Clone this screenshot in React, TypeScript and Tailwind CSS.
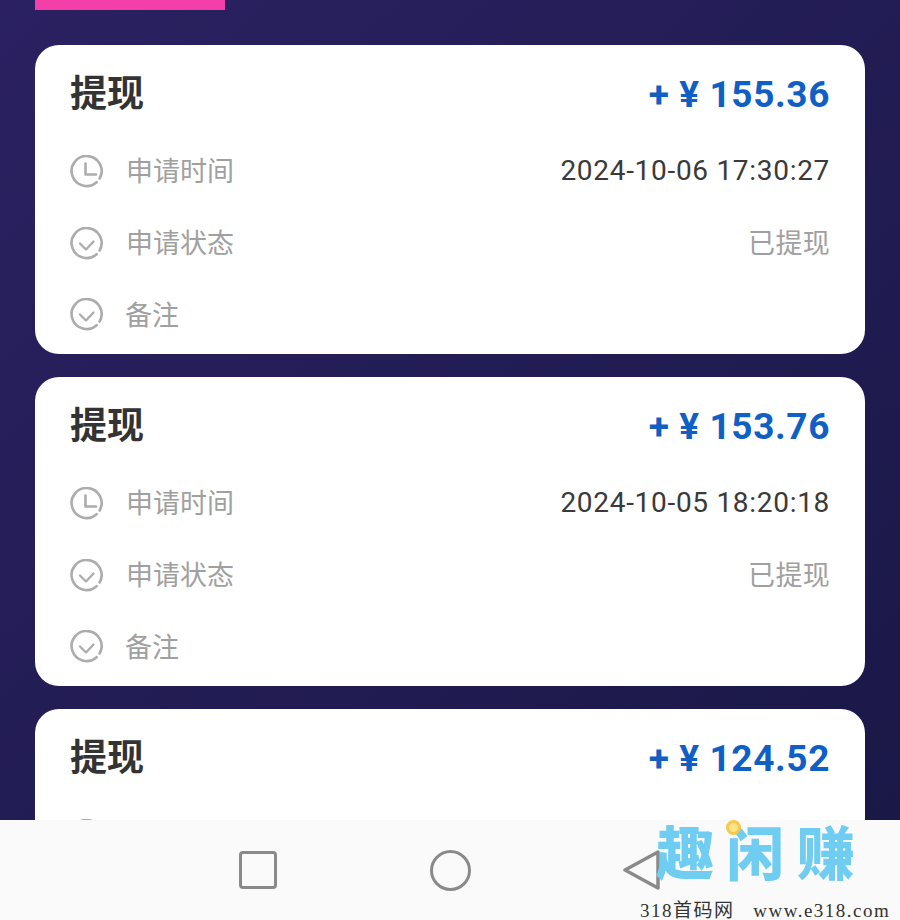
const cjk = "font-['Roboto','Noto_Sans_CJK_SC',sans-serif]";

interface Record {
  amount: string;
  time?: string;
}

const records: Record[] = [
  { amount: '155.36', time: '2024-10-06 17:30:27' },
  { amount: '153.76', time: '2024-10-05 18:20:18' },
  { amount: '124.52' },
];

function ClockIcon() {
  return (
    <svg width="33" height="33" viewBox="0 0 33 33" fill="none" stroke="#acacac" strokeWidth="2.6" strokeLinecap="round" strokeLinejoin="round" className="shrink-0">
      <path d="M26.6 27.2A15 15 0 1 1 29.6 23.5" />
      <path d="M15.5 8.5V19.5H26" />
    </svg>
  );
}

function CheckIcon() {
  return (
    <svg width="33" height="33" viewBox="0 0 33 33" fill="none" stroke="#acacac" strokeWidth="2.6" strokeLinecap="round" strokeLinejoin="round" className="shrink-0">
      <path d="M26.6 27.2A15 15 0 1 1 29.6 23.5" />
      <path d="M10 16.5L16 22.5L23.5 14.5" strokeWidth="2.3" />
    </svg>
  );
}

function Row({ icon, label, value, valueClass, labelClass }: { icon: React.ReactNode; label?: string; value?: string; valueClass?: string; labelClass?: string }) {
  return (
    <div className="flex h-[72px] items-center justify-between">
      <div className="flex items-center">
        {icon}
        {label && <span className={`pt-[2px] text-[27px] leading-none text-[#a0a0a0] ${labelClass ?? 'ml-[23px]'}`}>{label}</span>}
      </div>
      {value && <span className={valueClass}>{value}</span>}
    </div>
  );
}

function RecordCard({ record }: { record: Record }) {
  return (
    <div className="shrink-0 rounded-[24px] bg-white px-[35px] pb-[3px]">
      <div className="flex h-[90px] items-center justify-between pt-[8px]">
        <span className="text-[37px] leading-none font-bold text-[#333333]">提现</span>
        <span className="text-[37px] leading-none font-bold tracking-[0.6px] text-[#0f5fc4]">+ ¥ {record.amount}</span>
      </div>
      {/* the last card runs under the nav bar, only the top of its first icon shows */}
      {record.time ? (
        <>
          <Row icon={<ClockIcon />} label="申请时间" value={record.time} valueClass="text-[28px] leading-none tracking-[0.7px] text-[#3a3a3a]" />
          <Row icon={<CheckIcon />} label="申请状态" value="已提现" valueClass="pt-[2px] text-[27px] leading-none tracking-[0.3px] text-[#a0a0a0]" />
          <Row icon={<span className="mb-[2px] flex"><CheckIcon /></span>} label="备注" labelClass="ml-[22px]" />
        </>
      ) : (
        <Row icon={<ClockIcon />} />
      )}
    </div>
  );
}

export default function App() {
  return (
    <div className={`relative flex h-[920px] w-[900px] flex-col overflow-hidden ${cjk}`}>
      <main className="flex min-h-0 flex-1 flex-col overflow-hidden bg-linear-to-br from-[#2b2162] to-[#1a1847] px-[35px]">
        <div className="h-[10px] w-[190px] shrink-0 bg-[#f33fa7]" />
        <div className="mt-[35px] flex flex-col gap-[23px]">
          {records.map((r) => (
            <RecordCard key={r.amount} record={r} />
          ))}
        </div>
      </main>

      <nav className="flex h-[100px] shrink-0 items-center justify-center bg-[#fafafa]">
        <div className="flex w-[192px] justify-center">
          <div className="h-[38px] w-[38px] rounded-[4px] border-[3.5px] border-[#8a8a8a]" />
        </div>
        <div className="flex w-[192px] justify-center">
          <div className="h-[41px] w-[41px] rounded-full border-[3.5px] border-[#8a8a8a]" />
        </div>
        <div className="flex w-[192px] justify-center">
          <svg width="38" height="42" viewBox="0 0 38 42" fill="none" stroke="#8a8a8a" strokeWidth="3.5" strokeLinejoin="round">
            <path d="M35 3L2 21L35 39Z" />
          </svg>
        </div>
      </nav>

      {/* site watermark over the nav bar */}
      <div className="absolute top-[819px] left-[656px] flex flex-col">
        <div className="relative flex gap-[12.5px] text-[58px] leading-[72px] font-black text-[#6fcdf2]">
          <span>趣</span>
          <span>闲</span>
          <span>赚</span>
          <span className="absolute top-[1px] left-[70px] h-[15px] w-[15px] rounded-full border-[3px] border-[#f7c948] bg-[#fbe38a]" />
        </div>
        <div className="mt-[9px] ml-[-16px] font-['Liberation_Serif','Noto_Sans_CJK_SC',serif] text-[19px] leading-[22px] tracking-[1.5px] whitespace-nowrap text-[#333333]">
          318首码网 &nbsp; www.e318.com
        </div>
      </div>
    </div>
  );
}
